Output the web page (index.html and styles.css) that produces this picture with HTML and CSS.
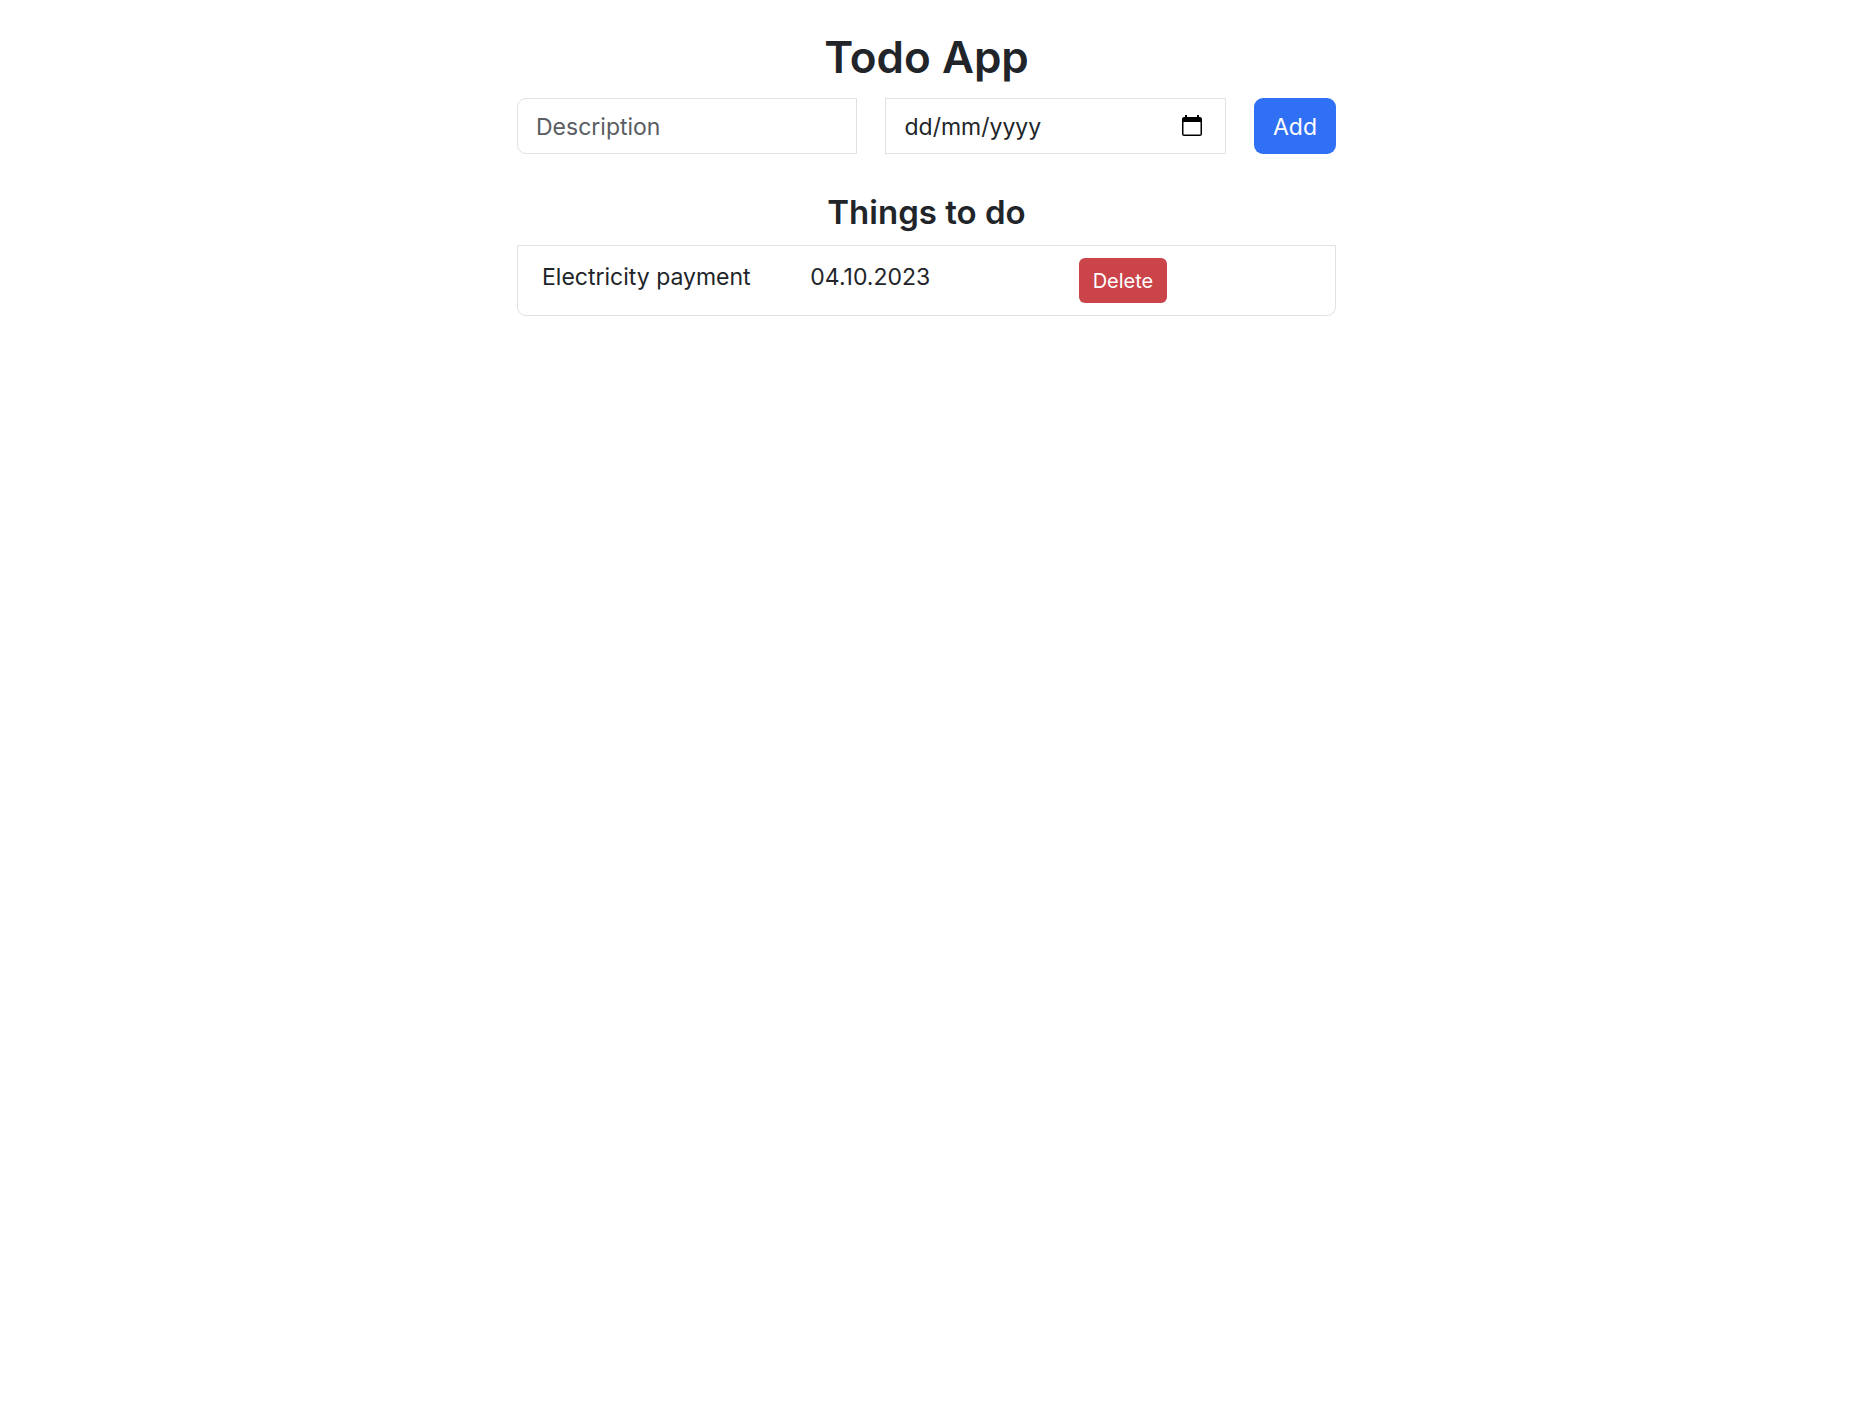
FILE: index.html
```html
<!DOCTYPE html>
<html lang="en">
<head>
  <meta charset="utf-8">
  <meta name="viewport" content="width=device-width, initial-scale=1">
  <title>Todo App</title>
  <link rel="stylesheet" href="styles.css">
</head>
<body>
  <main class="app">
    <h1 class="app-title">Todo App</h1>
    <form class="todo-form">
      <input class="field field-first" type="text" placeholder="Description" aria-label="Description">
      <div class="date-field">
        <input class="field field-date" type="text" inputmode="numeric" placeholder="dd/mm/yyyy" aria-label="Due date">
        <button class="picker" type="button" aria-label="Show date picker">
          <svg class="picker-icon" viewBox="0 0 24 24" aria-hidden="true"><path d="M20 3h-1V1h-2v2H7V1H5v2H4c-1.100 0-2 .9-2 2v15c0 1.100.9 2 2 2h16c1.100 0 2-.9 2-2V5c0-1.100-.9-2-2-2zm.5 17.500h-17V8h17v12.500z"/></svg>
        </button>
      </div>
      <button class="btn btn-add" type="submit">Add</button>
    </form>
    <h2 class="list-title">Things to do</h2>
    <ul class="todo-list">
      <li class="todo-item">
        <span class="cell">Electricity payment</span>
        <span class="cell">04.10.2023</span>
        <span class="cell"><button class="btn btn-delete" type="button">Delete</button></span>
      </li>
    </ul>
  </main>
</body>
</html>
```
FILE: styles.css
```css
* {
  box-sizing: border-box;
}

body {
  margin: 0;
  padding-left: 3px;
  background: #fff;
  color: #212529;
  font-family: Inter, "Liberation Sans", sans-serif;
  font-size: 23px;
  line-height: 38px;
}

.app {
  max-width: 819px;
  margin: 0 auto;
  padding-top: 28px;
}

.app-title,
.list-title {
  margin: 0;
  font-weight: 600;
  text-align: center;
}

.app-title {
  margin-bottom: 12px;
  font-size: 44px;
  line-height: 58px;
}

.list-title {
  margin: 36px 0 11px;
  font-size: 33px;
  line-height: 44px;
}

.todo-form {
  display: grid;
  grid-template-columns: 1fr 1fr auto;
  gap: 28px;
}

.field {
  width: 100%;
  height: 56px;
  padding: 2px 18px 0;
  border: 1px solid #dee2e6;
  border-radius: 0;
  background: #fff;
  color: inherit;
  font: inherit;
}

.field::placeholder {
  color: #5a5d61;
  opacity: 1;
}

.field-first {
  border-radius: 9px 0 0 9px;
}

.date-field {
  position: relative;
}

.field-date::placeholder {
  color: #212529;
}

.picker {
  position: absolute;
  top: 0;
  right: 22px;
  display: flex;
  align-items: center;
  height: 100%;
  padding: 0;
  border: 0;
  background: none;
}

.picker-icon {
  width: 24px;
  height: 24px;
}

.btn {
  border: 0;
  color: #fff;
  font: inherit;
  cursor: pointer;
}

.btn-add {
  height: 56px;
  padding: 2px 19px 0;
  border-radius: 9px;
  background: #3070f5;
}

.btn-delete {
  display: block;
  height: 45px;
  padding: 0 14px;
  border-radius: 6px;
  background: #ca444a;
  font-size: 20px;
}

.todo-list {
  margin: 0;
  padding: 0;
  list-style: none;
}

.todo-item {
  display: grid;
  grid-template-columns: repeat(3, 1fr);
  padding: 12px 0 12px 12px;
  border: 1px solid #dee2e6;
  border-radius: 0 0 9px 9px;
}

.cell {
  padding-left: 12px;
}
```
